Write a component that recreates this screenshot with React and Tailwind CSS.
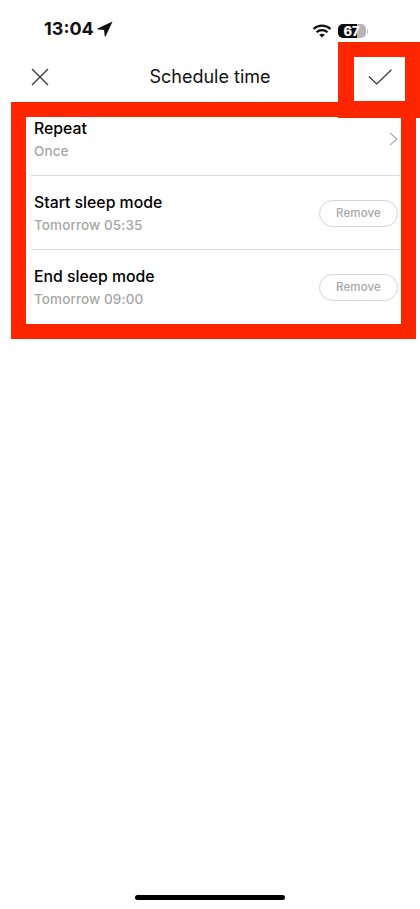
import React from "react";

function Row({ title, sub, action, h, pt }) {
  return (
    <div className={`flex items-center justify-between border-b border-[#d9d9d9] pl-[3px] last:border-b-0 ${h}`}>
      <div className={`flex flex-col self-start ${pt}`}>
        <div className="text-[15.8px] leading-[20px] font-medium text-black">{title}</div>
        <div className="mt-[2px] text-[13.5px] leading-[20px] font-medium tracking-[0.1px] text-[#a6a6a6]">{sub}</div>
      </div>
      {action}
    </div>
  );
}

function Remove() {
  return (
    <div className="mr-[2px] mt-[1px] flex h-[27px] w-[79px] items-center justify-center rounded-full border border-[#d4d4d4] pt-[1px] text-[11.5px] font-medium tracking-[0.15px] text-[#a6a6a6]">
      Remove
    </div>
  );
}

export default function App() {
  return (
    <div className="relative flex h-[909px] w-[420px] flex-col overflow-hidden bg-white font-['Inter','Liberation_Sans',sans-serif]">
      <div className="flex h-[44px] shrink-0 items-end justify-between pb-[5px] pl-[44px] pr-[52px]">
        <div className="flex items-center gap-[3px]">
          <span className="text-[18px] leading-[20px] font-bold text-[#111]">13:04</span>
          <svg width="16" height="16" viewBox="0 0 15 15" className="-mt-[1px]"><path d="M14.6 0.4 L0.4 7 Q0 7.9 1 8 L6.6 8.4 L7.2 14 Q7.4 15 8.1 14.3 Z" fill="#111" /></svg>
        </div>
        <div className="mb-[1px] flex items-center gap-[6px]">
          <svg width="20" height="14" viewBox="0 0 19 14" fill="none" stroke="#111" strokeWidth="2.2">
            <path d="M1 5 C5.8 0.6 13.2 0.6 18 5" />
            <path d="M4 8.2 C7 5.5 12 5.5 15 8.2" />
            <path d="M9.5 13.6 L6.7 10.8 C8.3 9.5 10.7 9.5 12.3 10.8 Z" fill="#111" stroke="none" />
          </svg>
          <div className="relative flex h-[14px] w-[28px] items-center justify-center overflow-hidden rounded-[5px] bg-[#b5b5b5] text-[13px] leading-none font-extrabold text-white">
            <div className="absolute inset-y-0 left-0 w-[19px] bg-[#0c0c0c]" />
            <span className="relative">67</span>
          </div>
          <div className="-ml-[5px] h-[5px] w-[1.5px] rounded-r-full bg-[#c4c4c4]" />
        </div>
      </div>

      <div className="relative flex h-[66px] shrink-0 items-center justify-between pl-[31px] pr-[28px]">
        <svg width="18" height="18" viewBox="0 0 18 18" stroke="#333" strokeWidth="1.2" fill="none">
          <path d="M1 1 L17 17 M17 1 L1 17" />
        </svg>
        <div className="absolute inset-x-0 text-center text-[18px] leading-[24px] text-[#111]">Schedule time</div>
        <svg width="24" height="16" viewBox="0 0 24 16" stroke="#333" strokeWidth="1.2" fill="none">
          <path d="M0.8 7.5 L8.8 15 L23.4 0.8" />
        </svg>
      </div>

      <div className="ml-[31px] mr-[20px] mt-[8px] flex flex-col">
        <Row title="Repeat" sub="Once" h="h-[58px]" pt="mt-[1px]" action={
          <svg width="9" height="14" viewBox="0 0 9 14" fill="none" stroke="#a8a8a8" strokeWidth="1.1" className="mr-[2px] -mt-[16px]">
            <path d="M1 0.8 L8 7 L1 13.2" />
          </svg>
        } />
        <Row title="Start sleep mode" sub="Tomorrow 05:35" h="h-[74px]" pt="mt-[17px]" action={<Remove />} />
        <Row title="End sleep mode" sub="Tomorrow 09:00" h="h-[74px]" pt="mt-[17px]" action={<Remove />} />
      </div>

      <div className="absolute bottom-[9px] left-[135px] h-[5px] w-[150px] rounded-full bg-black" />

      <div className="pointer-events-none absolute left-[11px] top-[102px] h-[237px] w-[405px] border-[15.5px] border-[#fd2600]" />
      <div className="pointer-events-none absolute left-[338px] top-[42px] h-[76px] w-[82px] border-y-[15px] border-b-[17px] border-l-[16px] border-r-[15px] border-[#fd2600]" />
    </div>
  );
}
